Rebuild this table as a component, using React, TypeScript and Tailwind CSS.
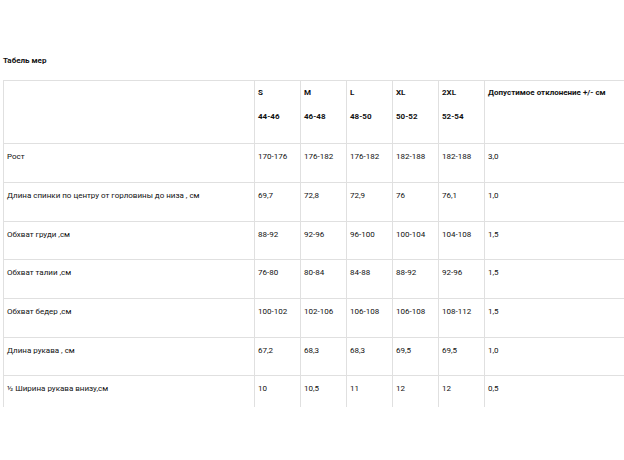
import React from "react";

const sizes = [
  ["S", "44-46"],
  ["M", "46-48"],
  ["L", "48-50"],
  ["XL", "50-52"],
  ["2XL", "52-54"],
];

const rows: { label: string; vals: string[]; tol: string; h: string }[] = [
  { label: "Рост", vals: ["170-176", "176-182", "176-182", "182-188", "182-188"], tol: "3,0", h: "h-[39px]" },
  { label: "Длина спинки по центру от горловины до низа , см", vals: ["69,7", "72,8", "72,9", "76", "76,1"], tol: "1,0", h: "h-[39px]" },
  { label: "Обхват груди ,см", vals: ["88-92", "92-96", "96-100", "100-104", "104-108"], tol: "1,5", h: "h-[38px]" },
  { label: "Обхват талии ,см", vals: ["76-80", "80-84", "84-88", "88-92", "92-96"], tol: "1,5", h: "h-[39px]" },
  { label: "Обхват бедер ,см", vals: ["100-102", "102-106", "106-108", "106-108", "108-112"], tol: "1,5", h: "h-[39px]" },
  { label: "Длина рукава , см", vals: ["67,2", "68,3", "68,3", "69,5", "69,5"], tol: "1,0", h: "h-[38px]" },
  { label: "½ Ширина рукава внизу,см", vals: ["10", "10,5", "11", "12", "12"], tol: "0,5", h: "h-[39px]" },
];

export default function App() {
  return (
    <div
      className="w-[624px] h-[460px] bg-white overflow-hidden text-[#111]"
      style={{ fontFamily: "Roboto, 'Liberation Sans', Arial, sans-serif" }}
    >
      <div className="pt-[56px] pl-[3px] text-[8px] leading-[10px] font-bold">Табель мер</div>
      <div className="mt-[14px] ml-[3px] h-[327px] w-[621px] overflow-hidden">
        <table className="table-fixed border-collapse w-[720px] text-[8px] leading-[10px]">
          <colgroup>
            <col className="w-[251px]" />
            <col className="w-[46px]" />
            <col className="w-[46px]" />
            <col className="w-[46px]" />
            <col className="w-[46px]" />
            <col className="w-[46px]" />
            <col />
          </colgroup>
          <tbody>
            <tr className="h-[63px]">
              <td className="border border-[#e0e0e0] align-top" />
              {sizes.map(([a, b]) => (
                <td key={a} className="border border-[#e0e0e0] align-top pl-[3px] pt-[7px] font-bold">
                  <div>{a}</div>
                  <div className="mt-[14px]">{b}</div>
                </td>
              ))}
              <td className="border border-[#e0e0e0] align-top pl-[3px] pt-[7px] font-bold whitespace-nowrap">
                Допустимое отклонение +/- см
              </td>
            </tr>
            {rows.map((r) => (
              <tr key={r.label} className={r.h}>
                <td className="border border-[#e0e0e0] align-top pl-[3px] pt-[8px] whitespace-nowrap">{r.label}</td>
                {r.vals.map((v, i) => (
                  <td key={i} className="border border-[#e0e0e0] align-top pl-[3px] pt-[8px] whitespace-nowrap">
                    {v}
                  </td>
                ))}
                <td className="border border-[#e0e0e0] align-top pl-[3px] pt-[8px]">{r.tol}</td>
              </tr>
            ))}
          </tbody>
        </table>
      </div>
    </div>
  );
}
